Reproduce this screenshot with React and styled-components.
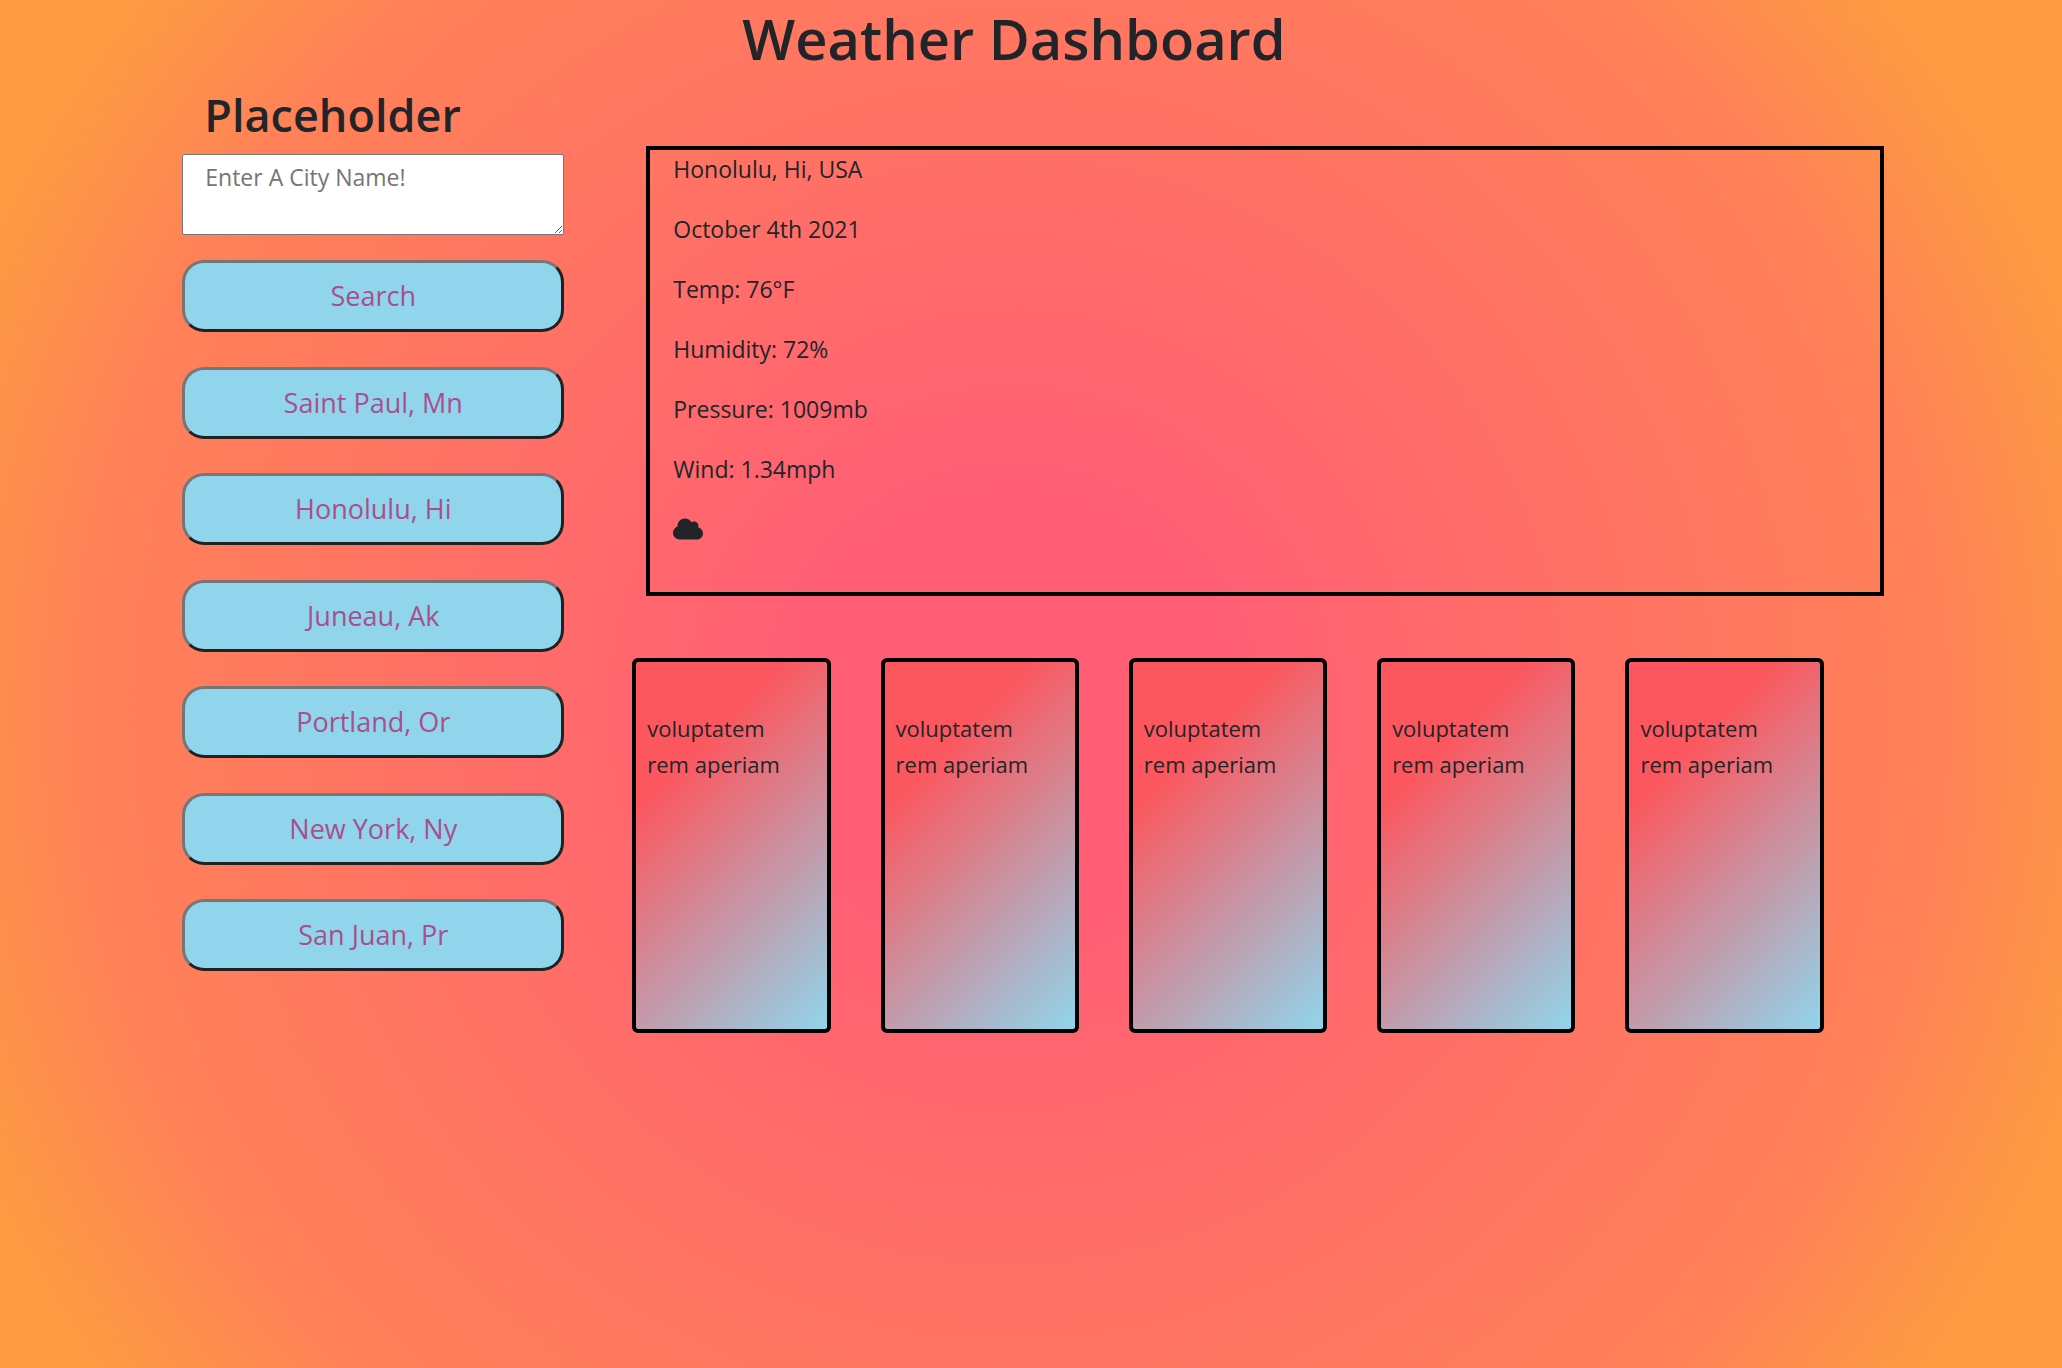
import React from "react";
import styled, { createGlobalStyle } from "styled-components";

const GlobalStyle = createGlobalStyle`
  *, *::before, *::after { box-sizing: border-box; }
  body {
    margin: 0;
    min-height: 100vh;
    color: #212529;
    font: 400 23px/36px "Segoe UI", "Open Sans", "Noto Sans", sans-serif;
    background: radial-gradient(circle at 49% 52%, #ff5e75 17%, #ff7a5e 60%, #ff8158 73%, #fd9a42 88%) no-repeat;
  }
  h1, h2, p { margin: 0; }
`;

const Page = styled.div`
  width: 83%;
  margin: 0 auto;
  padding: 0 3px 0 7px;
`;

const Title = styled.h1`
  padding: 2px 38px 2px 0;
  font-size: 56px;
  line-height: 72px;
  font-weight: 600;
  text-align: center;
`;

const Columns = styled.div`
  display: grid;
  grid-template-columns: 382px 1fr;
  column-gap: 82px;
`;

const Sidebar = styled.div`
  display: flex;
  flex-direction: column;
`;

const SideTitle = styled.h2`
  padding: 10px 22px;
  font-size: 45px;
  line-height: 58px;
  font-weight: 600;
`;

const CityBox = styled.textarea`
  display: block;
  height: 81px;
  margin-bottom: 25px;
  padding: 4px 22px;
  border: 1px solid #767676;
  border-radius: 2px;
  background: #fff;
  font: inherit;
  outline: none;
  &::placeholder { color: #757575; }
`;

const ButtonList = styled.div`
  display: flex;
  flex-direction: column;
  justify-content: space-between;
  gap: 34px;
  min-height: 711px;
`;

const CityButton = styled.button`
  height: 72px;
  padding: 0;
  border: 3px solid;
  border-color: #767676 #212121 #212121 #767676;
  border-radius: 22px;
  background: #90d5ec;
  color: #a94f8b;
  font: inherit;
  font-size: 27px;
`;

const Main = styled.main`
  padding-top: 70px;
`;

const Panel = styled.section`
  display: grid;
  align-content: start;
  row-gap: 24px;
  min-height: 450px;
  padding: 1px 23px;
  border: 4px solid #000;
`;

const Cloud = styled.svg`
  display: block;
  width: 30px;
  height: 36px;
`;

const Forecast = styled.div`
  display: grid;
  grid-template-columns: repeat(5, 1fr);
  column-gap: 50px;
  margin: 62px 60px 0 -14px;
`;

const Day = styled.article`
  height: 375px;
  padding: 48px 24px 48px 11px;
  border: 4px solid #000;
  border-radius: 6px;
  background: linear-gradient(315deg, #90d5ec 0%, #fc575e 74%);
  font-size: 22px;
`;

const cities = ["Saint Paul, Mn", "Honolulu, Hi", "Juneau, Ak", "Portland, Or", "New York, Ny", "San Juan, Pr"];
const conditions = ["Honolulu, Hi, USA", "October 4th 2021", "Temp: 76°F", "Humidity: 72%", "Pressure: 1009mb", "Wind: 1.34mph"];
const days = [1, 2, 3, 4, 5];

export default function App() {
  return (
    <>
      <GlobalStyle />
      <Page>
        <Title>Weather Dashboard</Title>
        <Columns>
          <Sidebar>
            <SideTitle id="city-label">Placeholder</SideTitle>
            <CityBox aria-labelledby="city-label" placeholder="Enter A City Name!" />
            <ButtonList>
              <CityButton type="button">Search</CityButton>
              {cities.map((city) => (
                <CityButton type="button" key={city}>{city}</CityButton>
              ))}
            </ButtonList>
          </Sidebar>
          <Main>
            <Panel>
              {conditions.map((line) => (
                <p key={line}>{line}</p>
              ))}
              <Cloud viewBox="0 0 640 512" role="img" aria-label="Cloudy">
                <path fill="currentColor" d="M537.600 226.600c4.100-10.700 6.400-22.400 6.400-34.600 0-53-43-96-96-96-19.700 0-38.100 6-53.300 16.200C367 64.200 315.300 32 256 32c-88.400 0-160 71.600-160 160 0 2.700.1 5.400.2 8.100C40.200 219.800 0 273.200 0 336c0 79.500 64.500 144 144 144h368c70.700 0 128-57.300 128-128 0-61.900-44-113.600-102.400-125.400z" />
              </Cloud>
            </Panel>
            <Forecast>
              {days.map((day) => (
                <Day key={day}>voluptatem rem aperiam</Day>
              ))}
            </Forecast>
          </Main>
        </Columns>
      </Page>
    </>
  );
}
